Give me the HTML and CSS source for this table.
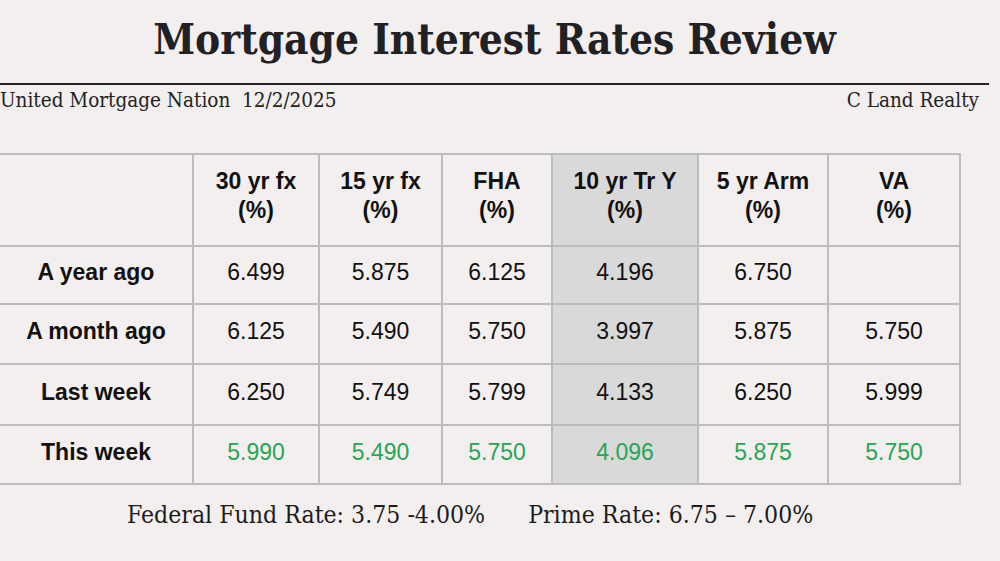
FILE: index.html
```html
<!DOCTYPE html>
<html>
<head>
<meta charset="utf-8">
<link rel="stylesheet" href="styles.css">
</head>
<body>
<div class="page">
  <header class="head">
    <h1 class="title">Mortgage Interest Rates Review</h1>
    <div class="rule"></div>
    <div class="sub">
      <span class="sub-left">United Mortgage Nation&nbsp; 12/2/2025</span>
      <span class="sub-right">C Land Realty</span>
    </div>
  </header>
  <table class="rates">
    <colgroup>
      <col class="c-label">
      <col class="c-30">
      <col class="c-15">
      <col class="c-fha">
      <col class="c-10">
      <col class="c-5">
      <col class="c-va">
    </colgroup>
    <thead>
      <tr class="hrow">
        <th class="first"></th>
        <th>30 yr fx<br>(%)</th>
        <th>15 yr fx<br>(%)</th>
        <th>FHA<br>(%)</th>
        <th class="shade">10 yr Tr Y<br>(%)</th>
        <th>5 yr Arm<br>(%)</th>
        <th>VA<br>(%)</th>
      </tr>
    </thead>
    <tbody>
      <tr class="r1">
        <th class="first">A year ago</th>
        <td>6.499</td><td>5.875</td><td>6.125</td><td class="shade">4.196</td><td>6.750</td><td></td>
      </tr>
      <tr class="r2">
        <th class="first">A month ago</th>
        <td>6.125</td><td>5.490</td><td>5.750</td><td class="shade">3.997</td><td>5.875</td><td>5.750</td>
      </tr>
      <tr class="r3">
        <th class="first">Last week</th>
        <td>6.250</td><td>5.749</td><td>5.799</td><td class="shade">4.133</td><td>6.250</td><td>5.999</td>
      </tr>
      <tr class="r4 now">
        <th class="first">This week</th>
        <td>5.990</td><td>5.490</td><td>5.750</td><td class="shade">4.096</td><td>5.875</td><td>5.750</td>
      </tr>
    </tbody>
  </table>
  <div class="foot">
    <span>Federal Fund Rate: 3.75 -4.00%</span>
    <span>Prime Rate: 6.75 – 7.00%</span>
  </div>
</div>
</body>
</html>
```

FILE: styles.css
```css
html, body {
  margin: 0;
  padding: 0;
  background: #f2efee;
}
.page {
  width: 1000px;
  height: 561px;
  overflow: hidden;
  color: #1c1c1c;
}
.head {
  width: 989px;
}
.title {
  margin: 0;
  padding-top: 14px;
  height: 70px;
  box-sizing: border-box;
  text-align: center;
  font-family: "DejaVu Serif Condensed", "DejaVu Serif", serif;
  font-stretch: condensed;
  font-weight: bold;
  font-size: 42px;
  line-height: 52px;
  color: #1f2124;
}
.rule {
  height: 2px;
  background: #232323;
  margin-top: 13px;
}
.sub {
  display: flex;
  justify-content: space-between;
  padding-right: 10px;
  height: 30px;
  font-family: "DejaVu Serif Condensed", "DejaVu Serif", serif;
  font-stretch: condensed;
  font-size: 20.5px;
  line-height: 30px;
  color: #222;
}
.rates {
  margin-top: 38px;
  border-collapse: collapse;
  table-layout: fixed;
  width: 961px;
  font-family: "Liberation Sans", Arial, sans-serif;
  font-size: 23px;
  color: #111;
}
.c-label { width: 193px; }
.c-30 { width: 126px; }
.c-15 { width: 123px; }
.c-fha { width: 110px; }
.c-10 { width: 146px; }
.c-5 { width: 130px; }
.c-va { width: 132px; }
.rates th, .rates td {
  border: 2px solid #bdbcbc;
  text-align: center;
  padding: 0;
  box-sizing: border-box;
}
.rates tbody th, .rates tbody td {
  padding-bottom: 5px;
}
.rates th.first {
  border-left: none;
}
.rates th {
  font-weight: bold;
}
.hrow th {
  height: 92px;
  line-height: 29px;
  padding-bottom: 9px;
}
.r1 > * { height: 58px; }
.r2 > * { height: 60px; }
.r3 > * { height: 61px; }
.r4 > * { height: 59px; }
.shade {
  background: #d9d9d9;
}
.now td {
  color: #27a655;
}
.foot {
  display: flex;
  gap: 43px;
  padding-left: 127px;
  margin-top: 15px;
  font-family: "DejaVu Serif Condensed", "DejaVu Serif", serif;
  font-stretch: condensed;
  font-size: 24.6px;
  line-height: 30px;
  color: #1c1c1c;
}
```
